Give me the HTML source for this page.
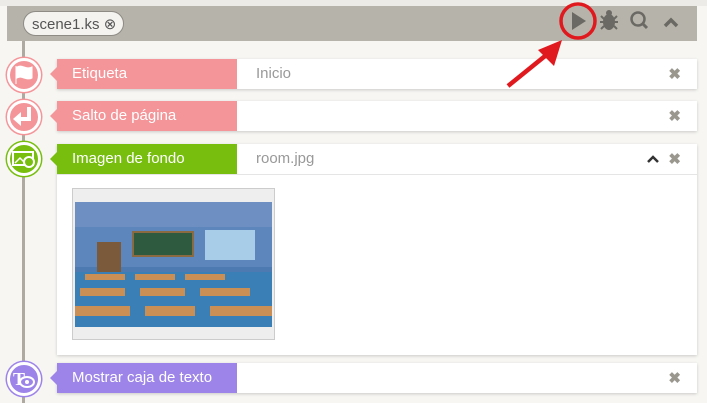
<!DOCTYPE html>
<html><head><meta charset="utf-8"><style>
*{margin:0;padding:0;box-sizing:border-box}
body{width:707px;height:403px;background:#f7f6f3;font-family:"Liberation Sans",sans-serif;position:relative;overflow:hidden}
.top{position:absolute;left:0;top:0;width:707px;height:6px;background:#ecebe7}
.bar{position:absolute;left:7px;top:6px;width:690px;height:35px;background:#b6b3aa}
.tab{position:absolute;left:23px;top:11px;width:101px;height:25px;border:1px solid #8e8b84;border-radius:13px;background:#f4f3f0;font-size:15px;color:#555;padding:3px 0 0 8px}
.vline{position:absolute;left:22px;top:41px;width:3px;height:362px;background:#aeaaa2}
.card{position:absolute;left:57px;width:640px;height:30px;background:#fff;box-shadow:0 1px 3px rgba(0,0,0,.18)}
.lab{position:absolute;left:0;top:0;width:180px;height:30px;color:#fff;font-size:15px;padding:6px 0 0 15px}
.lab:before{content:"";position:absolute;left:-7px;top:8px;border-right:7px solid;border-right-color:inherit;border-top:7px solid transparent;border-bottom:7px solid transparent}
.val{position:absolute;left:199px;top:6px;font-size:15px;color:#999}
.x{position:absolute;right:16px;top:6px;font-size:15px;color:#9a978f;font-weight:bold}
.c{position:absolute;left:7px;width:34px;height:34px;border-radius:50%;border:3px solid #fff}
</style></head><body>
<div class="top"></div>
<div class="bar"></div>
<div class="tab">scene1.ks ⊗</div>
<div class="vline"></div>

<div class="card" style="top:59px"><div class="lab" style="background:#f49599;border-right-color:#f49599">Etiqueta</div><div class="val">Inicio</div><div class="x">✖</div></div>
<div class="card" style="top:101px"><div class="lab" style="background:#f49599;border-right-color:#f49599">Salto de página</div><div class="x">✖</div></div>
<div class="card" style="top:144px;height:211px"><div class="lab" style="background:#77be0f;border-right-color:#77be0f">Imagen de fondo</div><div class="val">room.jpg</div><div class="x">✖</div>
<svg style="position:absolute;right:38px;top:10px" width="12" height="10"><path d="M1 8l5-5 5 5" fill="none" stroke="#333" stroke-width="2.5"/></svg>
<div style="position:absolute;left:0;top:30px;width:640px;height:1px;background:#e5e5e5"></div>
<div style="position:absolute;left:15px;top:44px;width:203px;height:152px;border:1px solid #ccc;background:#eee;padding:13px 2px">
<svg width="197" height="125" viewBox="0 0 197 125">
<rect width="197" height="125" fill="#4d7ab0"/>
<rect width="197" height="25" fill="#6e8fc2"/>
<rect x="0" y="25" width="197" height="40" fill="#5d86bd"/>
<rect x="58" y="30" width="60" height="24" fill="#2e5a3f" stroke="#8a6a40" stroke-width="2"/>
<rect x="130" y="28" width="50" height="30" fill="#a8cde8"/>
<rect x="22" y="40" width="24" height="36" fill="#7a5a3a"/>
<rect x="0" y="70" width="197" height="55" fill="#3a7fb5"/>
<g fill="#c98f55"><rect x="10" y="72" width="40" height="6"/><rect x="60" y="72" width="40" height="6"/><rect x="110" y="72" width="40" height="6"/><rect x="5" y="86" width="45" height="8"/><rect x="65" y="86" width="45" height="8"/><rect x="125" y="86" width="50" height="8"/><rect x="0" y="104" width="55" height="10"/><rect x="70" y="104" width="50" height="10"/><rect x="135" y="104" width="62" height="10"/></g>
</svg></div></div>
<div class="card" style="top:363px"><div class="lab" style="background:#9d84e9;border-right-color:#9d84e9">Mostrar caja de texto</div><div class="x">✖</div></div>

<svg style="position:absolute;left:530px;top:0;z-index:5" width="177" height="45">
<circle cx="48" cy="21" r="17" fill="none" stroke="#e0191e" stroke-width="3.5"/>
<path d="M42 12 L56 21 L42 30Z" fill="#6b6963"/>
<ellipse cx="79" cy="22" rx="6" ry="8" fill="#6b6963"/><circle cx="79" cy="13" r="3" fill="#6b6963"/>
<path d="M71 16l3 3M87 16l-3 3M70 22h4M88 22h-4M71 29l3-3M87 29l-3-3" stroke="#6b6963" stroke-width="2"/>
<circle cx="108" cy="19" r="6.5" fill="none" stroke="#6b6963" stroke-width="2.5"/><path d="M112 23l5 5" stroke="#6b6963" stroke-width="3"/>
<path d="M135 26l6-6 6 6" fill="none" stroke="#6b6963" stroke-width="3.5"/>
</svg>
<svg style="position:absolute;left:500px;top:30px;z-index:5" width="80" height="65"><path d="M8 56 L50 22" stroke="#e0191e" stroke-width="4.5"/><path d="M62 10 L38 20 L54 36Z" fill="#e0191e"/></svg>

<div class="c" style="top:58px;background:#f49599;box-shadow:0 0 0 1.5px #f49599"><svg width="28" height="28"><path d="M6 5v18M7 6c5-3 9 3 15 0v11c-6 3-10-3-15 0z" fill="#fff" stroke="#fff"/></svg></div>
<div class="c" style="top:100px;background:#f49599;box-shadow:0 0 0 1.5px #f49599"><svg width="28" height="28"><path d="M19 4v12H9" fill="none" stroke="#fff" stroke-width="4"/><path d="M3 16l8-7v14z" fill="#fff"/></svg></div>
<div class="c" style="top:142px;background:#77be0f;box-shadow:0 0 0 1.5px #77be0f"><svg width="28" height="28"><rect x="3" y="7" width="20" height="13" fill="none" stroke="#fff" stroke-width="2"/><path d="M5 18l5-5 4 4" fill="none" stroke="#fff" stroke-width="1.5"/><circle cx="19" cy="17" r="5" fill="#77be0f" stroke="#fff" stroke-width="2"/></svg></div>
<div class="c" style="top:362px;background:#9d84e9;box-shadow:0 0 0 1.5px #9d84e9"><svg width="28" height="28"><text x="3" y="20" font-size="18" font-family="Liberation Serif" font-weight="bold" fill="#fff">T</text><ellipse cx="17" cy="17" rx="7" ry="5" fill="none" stroke="#fff" stroke-width="2"/><circle cx="17" cy="17" r="2" fill="#fff"/></svg></div>
</body></html>
